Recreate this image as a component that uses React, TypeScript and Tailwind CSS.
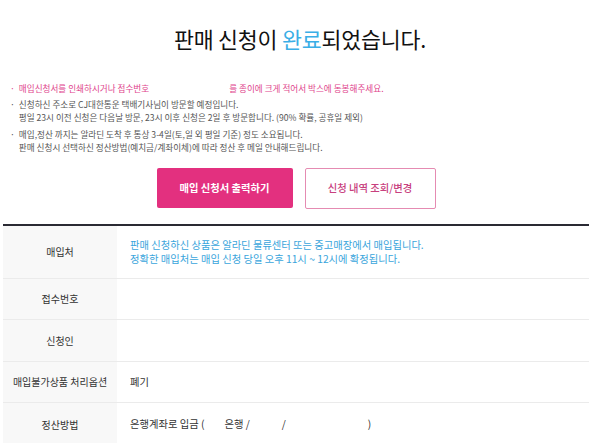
export default function App() {
  const rows = [
    {
      label: '매입처',
      h: 'h-[53px]',
      value: (
        <div className="text-[#3aa5dc] leading-[14px]">
          <p>판매 신청하신 상품은 알라딘 물류센터 또는 중고매장에서 매입됩니다.</p>
          <p>정확한 매입처는 매입 신청 당일 오후 11시 ~ 12시에 확정됩니다.</p>
        </div>
      ),
    },
    { label: '접수번호', h: 'h-[41px]', value: null },
    { label: '신청인', h: 'h-[42px]', value: null },
    { label: '매입불가상품 처리옵션', h: 'h-[41px]', value: <span className="text-[#333]">폐기</span> },
    {
      label: '정산방법',
      h: 'h-[44px]',
      value: (
        <span className="text-[#333] flex items-center">
          은행계좌로 입금 (<span className="inline-block w-[20px]" />은행 /<span className="inline-block w-[32px]" />/<span className="inline-block w-[82px]" />)
        </span>
      ),
    },
  ]

  return (
    <div className="w-[600px] h-[443px] overflow-hidden bg-white font-['Noto_Sans_CJK_KR','Noto_Sans',sans-serif]">
      <h1 className="pt-[23px] text-center text-[21.7px] leading-[32px] text-[#111] tracking-[-0.2px]">
        판매 신청이 <span className="text-[#3aaee6]">완료</span>되었습니다.
      </h1>

      {/* notices */}
      <ul className="mt-[27px] px-[10px] text-[8.6px] leading-[13.5px] text-[#555]">
        <li className="flex gap-[4px] text-[#e0448c]">
          <span>·</span>
          <span>
            매입신청서를 인쇄하시거나 접수번호<span className="inline-block w-[80px]" />를 종이에 크게 적어서 박스에 동봉해주세요.
          </span>
        </li>
        <li className="flex gap-[4px] mt-[2px]">
          <span>·</span>
          <span>
            신청하신 주소로 CJ대한통운 택배기사님이 방문할 예정입니다.
            <br />
            평일 23시 이전 신청은 다음날 방문, 23시 이후 신청은 2일 후 방문합니다. (90% 확률, 공휴일 제외)
          </span>
        </li>
        <li className="flex gap-[4px] mt-[3px]">
          <span>·</span>
          <span>
            매입,정산 까지는 알라딘 도착 후 통상 3-4일(토,일 외 평일 기준) 정도 소요됩니다.
            <br />
            판매 신청시 선택하신 정산방법(예치금/계좌이체)에 따라 정산 후 메일 안내해드립니다.
          </span>
        </li>
      </ul>

      {/* buttons */}
      <div className="mt-[13px] flex justify-center gap-[12px] pr-[8px]">
        <button className="w-[136px] h-[40px] rounded-[2px] bg-[#e3307f] text-white text-[10.3px] font-bold">
          매입 신청서 출력하기
        </button>
        <button className="w-[131px] h-[41px] rounded-[2px] border border-[#e58bb2] bg-white text-[#c8407e] text-[10.3px] font-medium">
          신청 내역 조회/변경
        </button>
      </div>

      {/* table */}
      <div className="mt-[15px] ml-[3px] mr-[11px] border-t-[2px] border-[#2a2a33]">
        {rows.map((r) => (
          <div key={r.label} className={`flex ${r.h} border-b border-[#ebebeb]`}>
            <div className="w-[114px] bg-[#f8f8f8] flex items-center justify-center text-[10px] text-[#333]">
              {r.label}
            </div>
            <div className="flex-1 flex items-center pl-[13px] text-[10.3px]">{r.value}</div>
          </div>
        ))}
      </div>
    </div>
  )
}
